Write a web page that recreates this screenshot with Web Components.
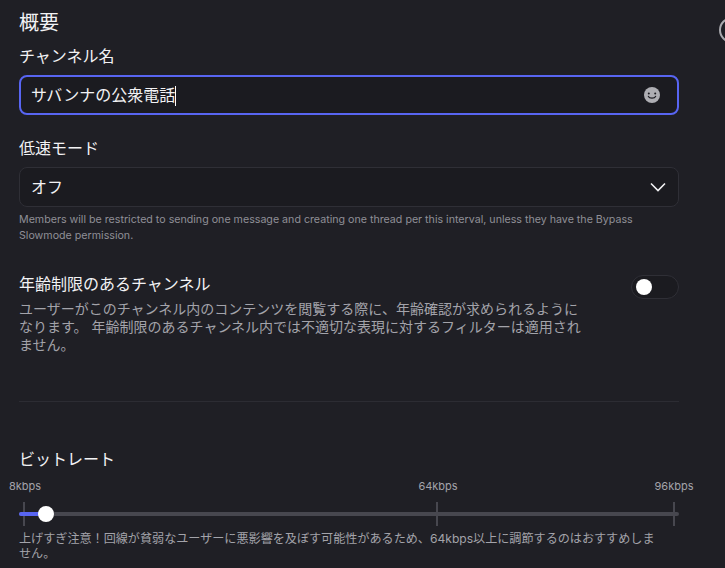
<!DOCTYPE html>
<html lang="ja">
  <head>
    <meta charset="UTF-8" />
    <title>Channel settings</title>
    <style>
      html, body { height: 100%; }
      body {
        margin: 0;
        overflow: hidden;
        background: #1f1f25;
        color: #f2f2f4;
        font-family: Inter, "Noto Sans CJK JP", sans-serif;
      }
    </style>
  </head>
  <body>
    <settings-page>
      <h-title>概要</h-title>
      <form-field label="チャンネル名" gap="9" top="10">
        <name-input value="サバンナの公衆電話"></name-input>
      </form-field>
      <form-field label="低速モード" gap="9" top="23">
        <select-box value="オフ"></select-box>
        <help-text>Members will be restricted to sending one message and creating one thread per this interval, unless they have the Bypass Slowmode permission.</help-text>
      </form-field>
      <toggle-row label="年齢制限のあるチャンネル">ユーザーがこのチャンネル内のコンテンツを閲覧する際に、年齢確認が求められるようになります。 年齢制限のあるチャンネル内では不適切な表現に対するフィルターは適用されません。</toggle-row>
      <h-rule></h-rule>
      <bitrate-slider label="ビットレート">上げすぎ注意！回線が貧弱なユーザーに悪影響を及ぼす可能性があるため、64kbps以上に調節するのはおすすめしません。</bitrate-slider>
    </settings-page>
    <script>
      function define(name, html, props) {
        class El extends HTMLElement {
          constructor() {
            super();
            this.attachShadow({ mode: "open" });
            this.shadowRoot.innerHTML = html;
          }
          connectedCallback() {
            if (props) props.call(this, this.shadowRoot);
          }
        }
        customElements.define(name, El);
      }

      define("settings-page", `
        <style>
          :host { display: block; width: 660px; padding: 10px 0 0 19px; }
          .avatar {
            position: absolute; left: 719px; top: 17px;
            width: 26px; height: 26px; box-sizing: border-box;
            border: 2px solid #a9a9ae; border-radius: 50%;
          }
        </style>
        <slot></slot>
        <div class="avatar"></div>`);

      define("h-title", `
        <style>:host { display: block; font-size: 20px; line-height: 26px; height: 26px; }</style>
        <slot></slot>`);

      define("form-field", `
        <style>
          :host { display: block; }
          .label { font-size: 16px; line-height: 20px; color: #f2f2f4; }
        </style>
        <div class="label"></div>
        <slot></slot>`, function (root) {
          root.querySelector(".label").textContent = this.getAttribute("label");
          root.querySelector(".label").style.marginBottom = this.getAttribute("gap") + "px";
          this.style.marginTop = this.getAttribute("top") + "px";
        });

      define("name-input", `
        <style>
          :host { display: block; }
          .box {
            display: flex; align-items: center; height: 40px; box-sizing: border-box;
            padding: 0 17px 0 10px;
            background: #1b1b20; border: 2px solid #5865f2; border-radius: 8px;
            font-size: 16px;
          }
          .text { flex: 1; margin-bottom: 2px; }
          .caret { display: inline-block; width: 1px; height: 20px; background: #fff; vertical-align: -5px; }
          svg { display: block; }
        </style>
        <div class="box">
          <span class="text"><span class="v"></span><span class="caret"></span></span>
          <svg width="16" height="16" viewBox="0 0 16 16">
            <circle cx="8" cy="8" r="8" fill="#aeaeb3"/>
            <circle cx="4.8" cy="6.4" r="1" fill="#1b1b20"/>
            <circle cx="11.2" cy="6.4" r="1" fill="#1b1b20"/>
            <path d="M4.4 9.4c1 2.2 6.2 2.2 7.2 0" fill="none" stroke="#1b1b20" stroke-width="1.2" stroke-linecap="round"/>
          </svg>
        </div>`, function (root) {
          root.querySelector(".v").textContent = this.getAttribute("value");
        });

      define("select-box", `
        <style>
          :host { display: block; }
          .box {
            display: flex; align-items: center; justify-content: space-between;
            height: 40px; box-sizing: border-box; padding: 0 12px 0 11px;
            background: #1b1b20; border: 1px solid #2f2f36; border-radius: 8px;
            font-size: 16px;
          }
          .v { margin-bottom: 2px; }
          svg { display: block; }
        </style>
        <div class="box">
          <span class="v"></span>
          <svg width="16" height="10" viewBox="0 0 16 10">
            <path d="M1 1.5l7 7 7-7" fill="none" stroke="#f2f2f4" stroke-width="1.6"/>
          </svg>
        </div>`, function (root) {
          root.querySelector(".v").textContent = this.getAttribute("value");
        });

      define("help-text", `
        <style>
          :host { display: block; margin-top: 5px; font-size: 10.67px; line-height: 16px; color: #8f8f97; }
        </style>
        <slot></slot>`);

      define("toggle-row", `
        <style>
          :host { display: flex; justify-content: space-between; margin-top: 30px; }
          .label { font-size: 16px; line-height: 20px; }
          .desc { width: 566px; margin-top: 6px; font-size: 14px; line-height: 18px; color: #a3a3aa; }
          .toggle {
            position: relative; width: 48px; height: 24px; box-sizing: border-box; margin-top: 1px;
            background: #1b1b20; border: 1px solid #2f2f36; border-radius: 12px;
          }
          .toggle i {
            position: absolute; left: 4px; top: 3px;
            width: 16px; height: 16px; background: #fff; border-radius: 50%;
          }
        </style>
        <div>
          <div class="label"></div>
          <div class="desc"><slot></slot></div>
        </div>
        <div class="toggle"><i></i></div>`, function (root) {
          root.querySelector(".label").textContent = this.getAttribute("label");
        });

      define("h-rule", `
        <style>:host { display: block; height: 1px; margin-top: 47px; background: #2c2c33; }</style>`);

      define("bitrate-slider", `
        <style>
          :host { display: block; margin-top: 47px; position: relative; }
          .label { font-size: 16px; line-height: 20px; }
          .marks {
            position: relative; height: 16px; margin-top: 9px;
            font-size: 11px; line-height: 16px; color: #a3a3aa;
          }
          .marks span { position: absolute; top: 0; transform: translateX(-50%); }
          .track { position: relative; height: 24px; margin-top: 8px; }
          .rail {
            position: absolute; left: 0; right: 0; top: 10px; height: 4px;
            background: #47474f; border-radius: 2px;
          }
          .fill {
            position: absolute; left: 0; width: 27px; top: 10px; height: 4px;
            background: #5865f2; border-radius: 2px;
          }
          .tick { position: absolute; top: 0; width: 2px; height: 24px; background: #47474f; }
          .thumb {
            position: absolute; left: 19px; top: 4px; width: 16px; height: 16px;
            background: #fff; border-radius: 50%;
          }
          .desc { width: 644px; margin-top: 5px; font-size: 12.1px; line-height: 15px; color: #a3a3aa; }
        </style>
        <div class="label"></div>
        <div class="marks">
          <span style="left:6px">8kbps</span>
          <span style="left:419px">64kbps</span>
          <span style="left:655px">96kbps</span>
        </div>
        <div class="track">
          <div class="rail"></div>
          <div class="tick" style="left:4px"></div>
          <div class="tick" style="left:417px"></div>
          <div class="tick" style="left:654px"></div>
          <div class="fill"></div>
          <div class="thumb"></div>
        </div>
        <div class="desc"><slot></slot></div>`, function (root) {
          root.querySelector(".label").textContent = this.getAttribute("label");
        });
    </script>
  </body>
</html>
